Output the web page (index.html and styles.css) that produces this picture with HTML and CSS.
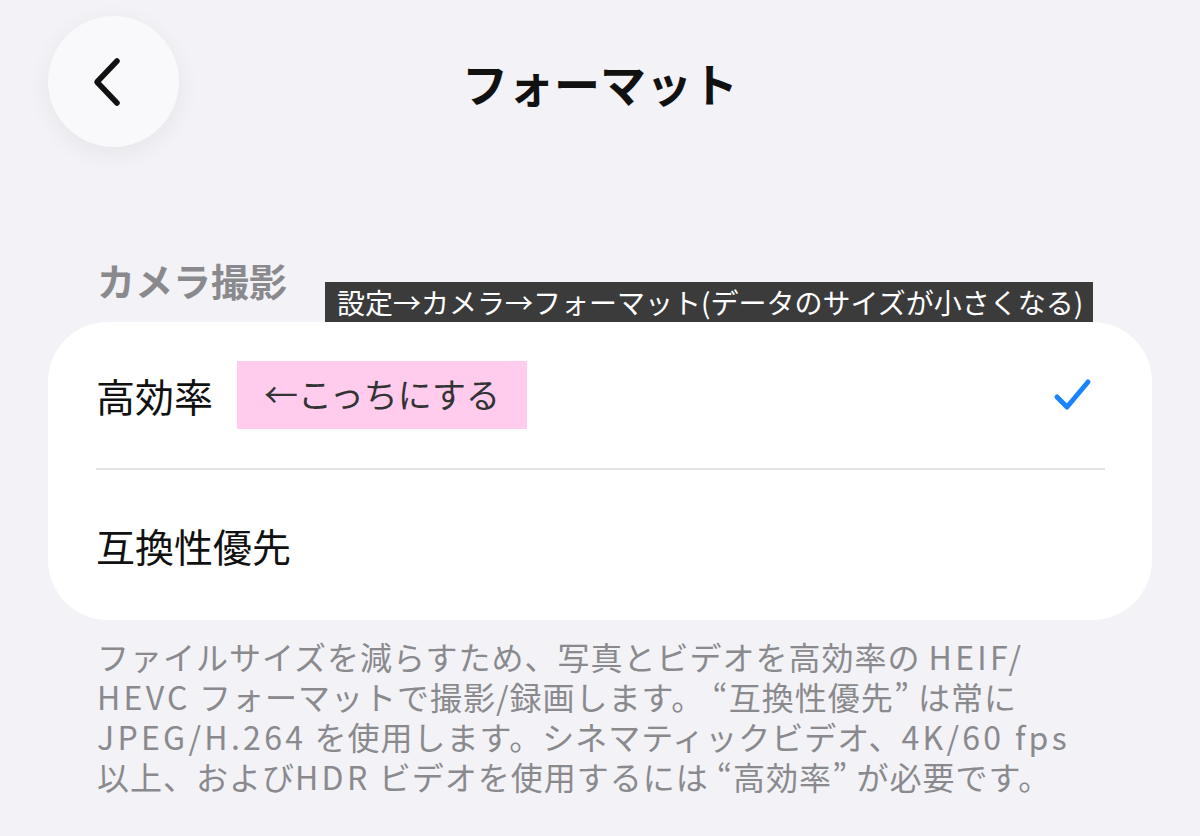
FILE: index.html
```html
<!DOCTYPE html>
<html lang="ja">
<head>
    <meta charset="UTF-8">
    <meta name="viewport" content="width=device-width, initial-scale=1.0">
    <title>フォーマット</title>
    <link rel="stylesheet" href="styles.css">
</head>
<body>
    <div class="page">
        <div class="header">
            <div class="back-button">
                <svg width="40" height="60" viewBox="0 0 40 60">
                    <path d="M28 9 L8 30 L28 51" fill="none" stroke="#111" stroke-width="5.5" stroke-linecap="round" stroke-linejoin="round"/>
                </svg>
            </div>
            <h1 class="title">フォーマット</h1>
            <div></div>
        </div>

        <div class="section">
            <div class="section-title">カメラ撮影</div>
            <div class="note">設定→カメラ→フォーマット(データのサイズが小さくなる)</div>
        </div>

        <div class="card">
            <div class="row">
                <span class="row-label">高効率</span>
                <span class="marker">←こっちにする</span>
                <svg class="check" width="44" height="44" viewBox="0 0 44 44">
                    <path d="M6 24 L16 34 L37 9" fill="none" stroke="#1a84ff" stroke-width="5" stroke-linecap="round" stroke-linejoin="round"/>
                </svg>
            </div>
            <div class="row last">
                <span class="row-label">互換性優先</span>
            </div>
        </div>

        <div class="footer">
            <div class="footer-line">ファイルサイズを減らすため、写真とビデオを高効率の <span class="latin">HEIF/</span></div>
            <div class="footer-line"><span class="latin">HEVC</span> フォーマットで撮影/録画します。 “互換性優先” は常に</div>
            <div class="footer-line"><span class="latin">JPEG/H.264</span> を使用します。シネマティックビデオ、<span class="latin">4K/60 fps</span></div>
            <div class="footer-line">以上、および<span class="latin">HDR</span> ビデオを使用するには “高効率” が必要です。</div>
        </div>
    </div>
</body>
</html>
```

FILE: styles.css
```css
body {
    margin: 0;
    background-color: #f2f2f7;
    font-family: "Noto Sans CJK JP", "Noto Sans", sans-serif;
    color: #111;
}
.page {
    padding: 16px 48px 0 48px;
}
.header {
    display: grid;
    grid-template-columns: 1fr auto 1fr;
    align-items: center;
    height: 131px;
}
.back-button {
    width: 131px;
    height: 131px;
    border-radius: 50%;
    background: #f9f9fb;
    box-shadow: 0 6px 24px rgba(0, 0, 0, 0.06);
    display: flex;
    justify-content: center;
    align-items: center;
}
.back-button svg {
    margin-left: -10px;
}
.title {
    margin: 0;
    font-size: 46px;
    font-weight: bold;
}
.section {
    position: relative;
    margin-top: 110px;
    padding-left: 49px;
}
.section-title {
    font-size: 38px;
    line-height: 46px;
    font-weight: bold;
    color: #8a8a8e;
}
.note {
    position: absolute;
    left: 277px;
    top: 25px;
    height: 40px;
    padding: 0 10px 0 12px;
    background: #3b3b3b;
    color: #fff;
    font-size: 28px;
    line-height: 40px;
    white-space: nowrap;
}
.card {
    margin-top: 19px;
    background: #fff;
    border-radius: 60px;
}
.row {
    display: flex;
    align-items: center;
    margin: 0 47px 0 48px;
    height: 146px;
    border-bottom: 2px solid #e3e3e7;
}
.row.last {
    height: 150px;
    border-bottom: none;
}
.row-label {
    font-size: 39px;
}
.marker {
    margin-left: 24px;
    padding: 0 27px;
    height: 68px;
    line-height: 66px;
    background: #ffccee;
    color: #333;
    font-size: 34px;
}
.check {
    margin-left: auto;
    margin-right: 10px;
}
.footer {
    margin-top: 16px;
    padding-left: 49px;
    font-size: 32px;
    letter-spacing: 1px;
    color: #8a8a8e;
}
.footer-line {
    height: 40px;
    line-height: 40px;
    white-space: nowrap;
}
.latin {
    display: inline-block;
    line-height: 40px;
    letter-spacing: 3.3px;
}
```
